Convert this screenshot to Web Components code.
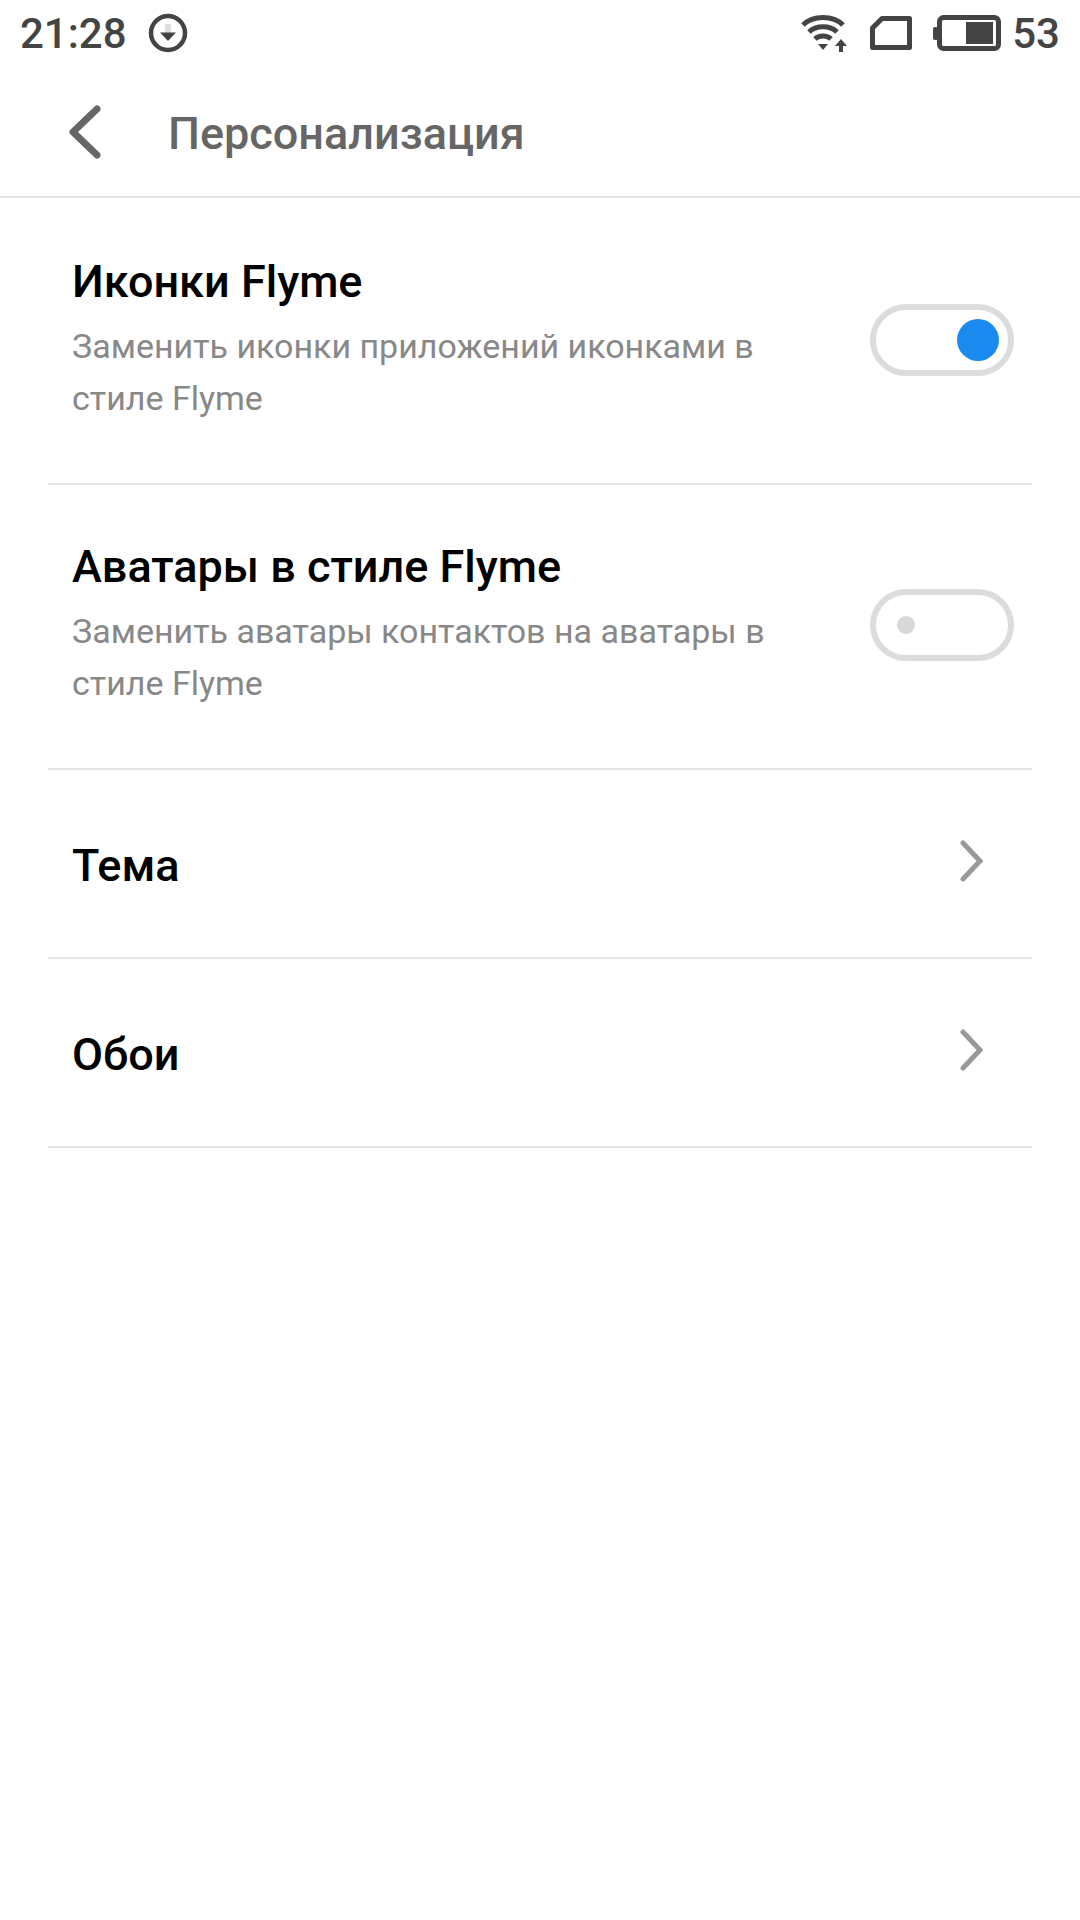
<!DOCTYPE html>
<html>
<head>
<meta charset="utf-8">
<style>
  html, body { margin: 0; padding: 0; background: #fff; }
  body { font-family: Roboto, "Noto Sans", sans-serif; width: 1080px; height: 1920px; overflow: hidden; }
</style>
</head>
<body>
<status-bar></status-bar>
<title-bar>Персонализация</title-bar>
<setting-list>
  <switch-row on title="Иконки Flyme">Заменить иконки приложений иконками в<br>стиле Flyme</switch-row>
  <switch-row title="Аватары в стиле Flyme">Заменить аватары контактов на аватары в<br>стиле Flyme</switch-row>
  <link-row>Тема</link-row>
  <link-row>Обои</link-row>
</setting-list>

<script>
class StatusBar extends HTMLElement {
    constructor() {
        super();
        this.attachShadow({mode: "open"}).innerHTML = `
            <style>
                :host { display: flex; align-items: center; height: 66px; padding: 0 20px; color: #444; font-size: 42px; font-weight: 500; }
                svg { display: block; flex: none; }
                .left { display: flex; align-items: center; gap: 21px; }
                .right { margin-left: auto; display: flex; align-items: center; }
            </style>
            <div class="left">
                <span>21:28</span>
                <svg width="40" height="40" viewBox="0 0 40 40">
                    <circle cx="20" cy="20" r="17" fill="none" stroke="#444" stroke-width="4.5"/>
                    <rect x="17" y="11" width="6" height="9" fill="#ddd"/>
                    <path d="M12 19.5h16l-8 8.5z" fill="#444"/>
                </svg>
            </div>
            <div class="right">
                <svg style="margin-top:-3px" width="48" height="40" viewBox="0 0 48 40" fill="none" stroke="#444" stroke-width="5">
                    <path d="M2 13C12 3 32 3 42 13"/>
                    <path d="M8 20C15 13 29 13 36 20"/>
                    <path d="M14 27C18 23 26 23 30 27"/>
                    <path d="M17 32h10l-5 6z" fill="#444" stroke="none"/>
                    <path d="M34 34l6-7 6 7h-4v6h-4v-6z" fill="#444" stroke="none"/>
                </svg>
                <svg style="margin-left:21px" width="42" height="34" viewBox="0 0 42 34" fill="none">
                    <path d="M12 2.5H39.5V31.5H2.5V12z" stroke="#444" stroke-width="5" stroke-linejoin="round"/>
                </svg>
                <svg style="margin-left:21px" width="68" height="36" viewBox="0 0 68 36" fill="none">
                    <rect x="0" y="12" width="5" height="13" rx="2" fill="#444"/>
                    <rect x="6.5" y="2.5" width="59" height="31" rx="4" stroke="#444" stroke-width="5"/>
                    <rect x="33" y="7" width="27" height="22" fill="#444"/>
                </svg>
                <span style="margin-left:11px">53</span>
            </div>
        `;
    }
}

class TitleBar extends HTMLElement {
    constructor() {
        super();
        this.attachShadow({mode: "open"}).innerHTML = `
            <style>
                :host { display: flex; align-items: center; height: 130px; border-bottom: 2px solid #e4e4e4; color: #666; font-size: 45px; font-weight: 500; }
                svg { display: block; margin-left: 68px; margin-top: 2px; flex: none; }
                span { margin-left: 66px; margin-top: 4px; }
            </style>
            <svg width="34" height="54" viewBox="0 0 34 54" fill="none">
                <path d="M29 4L5 27l24 23" stroke="#666" stroke-width="7" stroke-linecap="round" stroke-linejoin="round"/>
            </svg>
            <span><slot></slot></span>
        `;
    }
}

class SettingList extends HTMLElement {
    constructor() {
        super();
        this.attachShadow({mode: "open"}).innerHTML = `
            <style>
                :host { display: block; margin: 0 48px; padding-top: 2px; }
            </style>
            <slot></slot>
        `;
    }
}

class SwitchRow extends HTMLElement {
    constructor() {
        super();
        const on = this.hasAttribute("on");
        this.attachShadow({mode: "open"}).innerHTML = `
            <style>
                :host { display: flex; align-items: center; justify-content: space-between; height: 283px; padding: 0 18px 0 24px; border-bottom: 2px solid #e4e4e4; }
                h3 { margin: 0 0 10px; font-size: 45px; line-height: 56px; font-weight: 500; color: #000; }
                p { margin: 0; font-size: 34px; line-height: 52px; color: #888; }
                .text { margin-top: -5px; }
                .track { position: relative; flex: none; box-sizing: border-box; width: 144px; height: 72px; margin-top: -3px; border: 6px solid #dcdcdc; border-radius: 36px; background: #fff; }
                .knob { position: absolute; border-radius: 50%; }
                .knob.on { width: 42px; height: 42px; right: 9px; top: 9px; background: #1b8aee; }
                .knob.off { width: 18px; height: 18px; left: 21px; top: 21px; background: #d8d8d8; }
            </style>
            <div class="text">
                <h3>${this.getAttribute("title")}</h3>
                <p><slot></slot></p>
            </div>
            <div class="track"><div class="knob ${on ? "on" : "off"}"></div></div>
        `;
    }
}

class LinkRow extends HTMLElement {
    constructor() {
        super();
        this.attachShadow({mode: "open"}).innerHTML = `
            <style>
                :host { display: flex; align-items: center; justify-content: space-between; height: 187px; padding: 0 48px 0 24px; border-bottom: 2px solid #e4e4e4; font-size: 45px; font-weight: 500; color: #000; }
                svg { display: block; flex: none; margin-top: -6px; }
                span { margin-top: 3px; }
            </style>
            <span><slot></slot></span>
            <svg width="26" height="42" viewBox="0 0 26 42" fill="none">
                <path d="M5 3l17 18L5 39" stroke="#999" stroke-width="5" stroke-linecap="round" stroke-linejoin="miter"/>
            </svg>
        `;
    }
}

customElements.define("status-bar", StatusBar);
customElements.define("title-bar", TitleBar);
customElements.define("setting-list", SettingList);
customElements.define("switch-row", SwitchRow);
customElements.define("link-row", LinkRow);
</script>
</body>
</html>
